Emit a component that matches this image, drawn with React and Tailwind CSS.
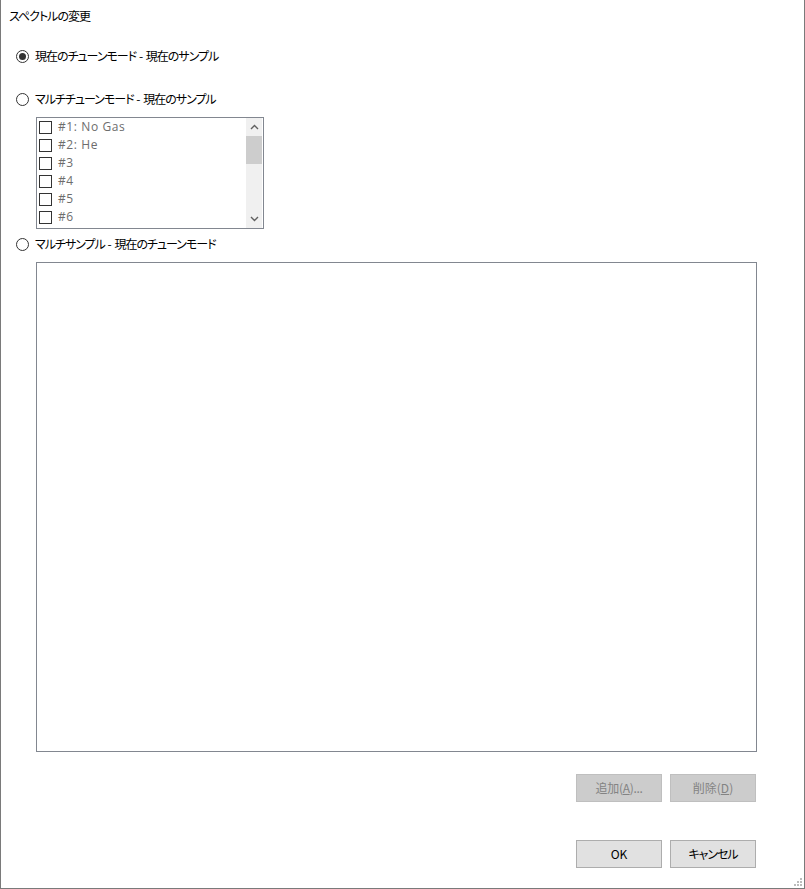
import React from "react";

const font = { fontFamily: '"Noto Sans CJK JP", "Noto Sans", sans-serif' };

function JP({ children }) {
  return <span className="[font-feature-settings:'palt'] tracking-[-1px]">{children}</span>;
}

function Radio({ checked, left, right, className = "" }) {
  return (
    <div className={`flex items-center h-[16px] ${className}`}>
      <div className="ml-[15px] w-[13px] h-[13px] rounded-full border border-[#333333] bg-white flex items-center justify-center">
        {checked && <div className="w-[7px] h-[7px] rounded-full bg-[#333333]" />}
      </div>
      <span className="ml-[6px] text-[12px] leading-[16px] text-black whitespace-pre">
        <JP>{left}</JP>
        {" - "}
        <JP>{right}</JP>
      </span>
    </div>
  );
}

function Item({ label }) {
  return (
    <div className="flex items-center h-[18px]">
      <div className="ml-[2px] w-[13px] h-[13px] border border-[#333333] bg-white" />
      <span className="ml-[6px] text-[12px] leading-[16px] tracking-[0.6px] text-[#6d6d6d] [font-family:'Open_Sans','Noto_Sans',sans-serif]">{label}</span>
    </div>
  );
}

export default function App() {
  const items = ["#1: No Gas", "#2: He", "#3", "#4", "#5", "#6"];
  return (
    <div
      className="w-[805px] h-[889px] bg-white border-l border-r border-b border-[#7a7a7a] flex flex-col relative overflow-hidden"
      style={font}
    >
      <div className="pl-[8px] pt-[8px] h-[24px] text-[12px] leading-[16px] text-black">
        <JP>スペクトルの変更</JP>
      </div>
      <Radio checked left="現在のチューンモード" right="現在のサンプル" className="mt-[24px]" />
      <Radio left="マルチチューンモード" right="現在のサンプル" className="mt-[27px]" />
      <div className="ml-[35px] mt-[10px] w-[228px] h-[112px] border border-[#828790] flex">
        <div className="flex-1 flex flex-col">
          {items.map((t) => (
            <Item key={t} label={t} />
          ))}
        </div>
        <div className="w-[16px] mr-[1px] bg-[#f0f0f0] flex flex-col items-center">
          <div className="h-[18px] flex items-center justify-center">
            <svg width="9" height="6" viewBox="0 0 9 6">
              <path d="M1 5 L4.5 1.5 L8 5" fill="none" stroke="#606060" strokeWidth="1.4" />
            </svg>
          </div>
          <div className="w-[16px] h-[28px] bg-[#cdcdcd]" />
          <div className="flex-1" />
          <div className="h-[18px] flex items-center justify-center">
            <svg width="9" height="6" viewBox="0 0 9 6">
              <path d="M1 1 L4.5 4.5 L8 1" fill="none" stroke="#606060" strokeWidth="1.4" />
            </svg>
          </div>
        </div>
      </div>
      <Radio left="マルチサンプル" right="現在のチューンモード" className="mt-[7px]" />
      <div className="ml-[35px] mt-[10px] w-[721px] h-[490px] border border-[#828790] bg-white" />
      <div className="flex justify-end gap-[8px] pr-[48px] mt-[22px]">
        <div className="w-[86px] h-[28px] bg-[#cccccc] border border-[#bfbfbf] flex items-center justify-center text-[12px] text-[#838383] tracking-[-0.3px]">
          追加(<span className="underline">A</span>)...
        </div>
        <div className="w-[86px] h-[28px] bg-[#cccccc] border border-[#bfbfbf] flex items-center justify-center text-[12px] text-[#838383]">
          削除(<span className="underline">D</span>)
        </div>
      </div>
      <div className="flex justify-end gap-[8px] pr-[48px] mt-[38px]">
        <div className="w-[86px] h-[28px] bg-[#e1e1e1] border border-[#adadad] flex items-center justify-center text-[12px] text-black">
          OK
        </div>
        <div className="w-[86px] h-[28px] bg-[#e1e1e1] border border-[#adadad] flex items-center justify-center text-[12px] text-black">
          <JP>キャンセル</JP>
        </div>
      </div>
      <svg className="absolute right-[1px] bottom-[1px]" width="10" height="10" viewBox="0 0 10 10">
        <rect x="7" y="1" width="2" height="2" fill="#bcbcbc" />
        <rect x="4" y="4" width="2" height="2" fill="#bcbcbc" />
        <rect x="7" y="4" width="2" height="2" fill="#bcbcbc" />
        <rect x="1" y="7" width="2" height="2" fill="#bcbcbc" />
        <rect x="4" y="7" width="2" height="2" fill="#bcbcbc" />
        <rect x="7" y="7" width="2" height="2" fill="#bcbcbc" />
      </svg>
    </div>
  );
}
